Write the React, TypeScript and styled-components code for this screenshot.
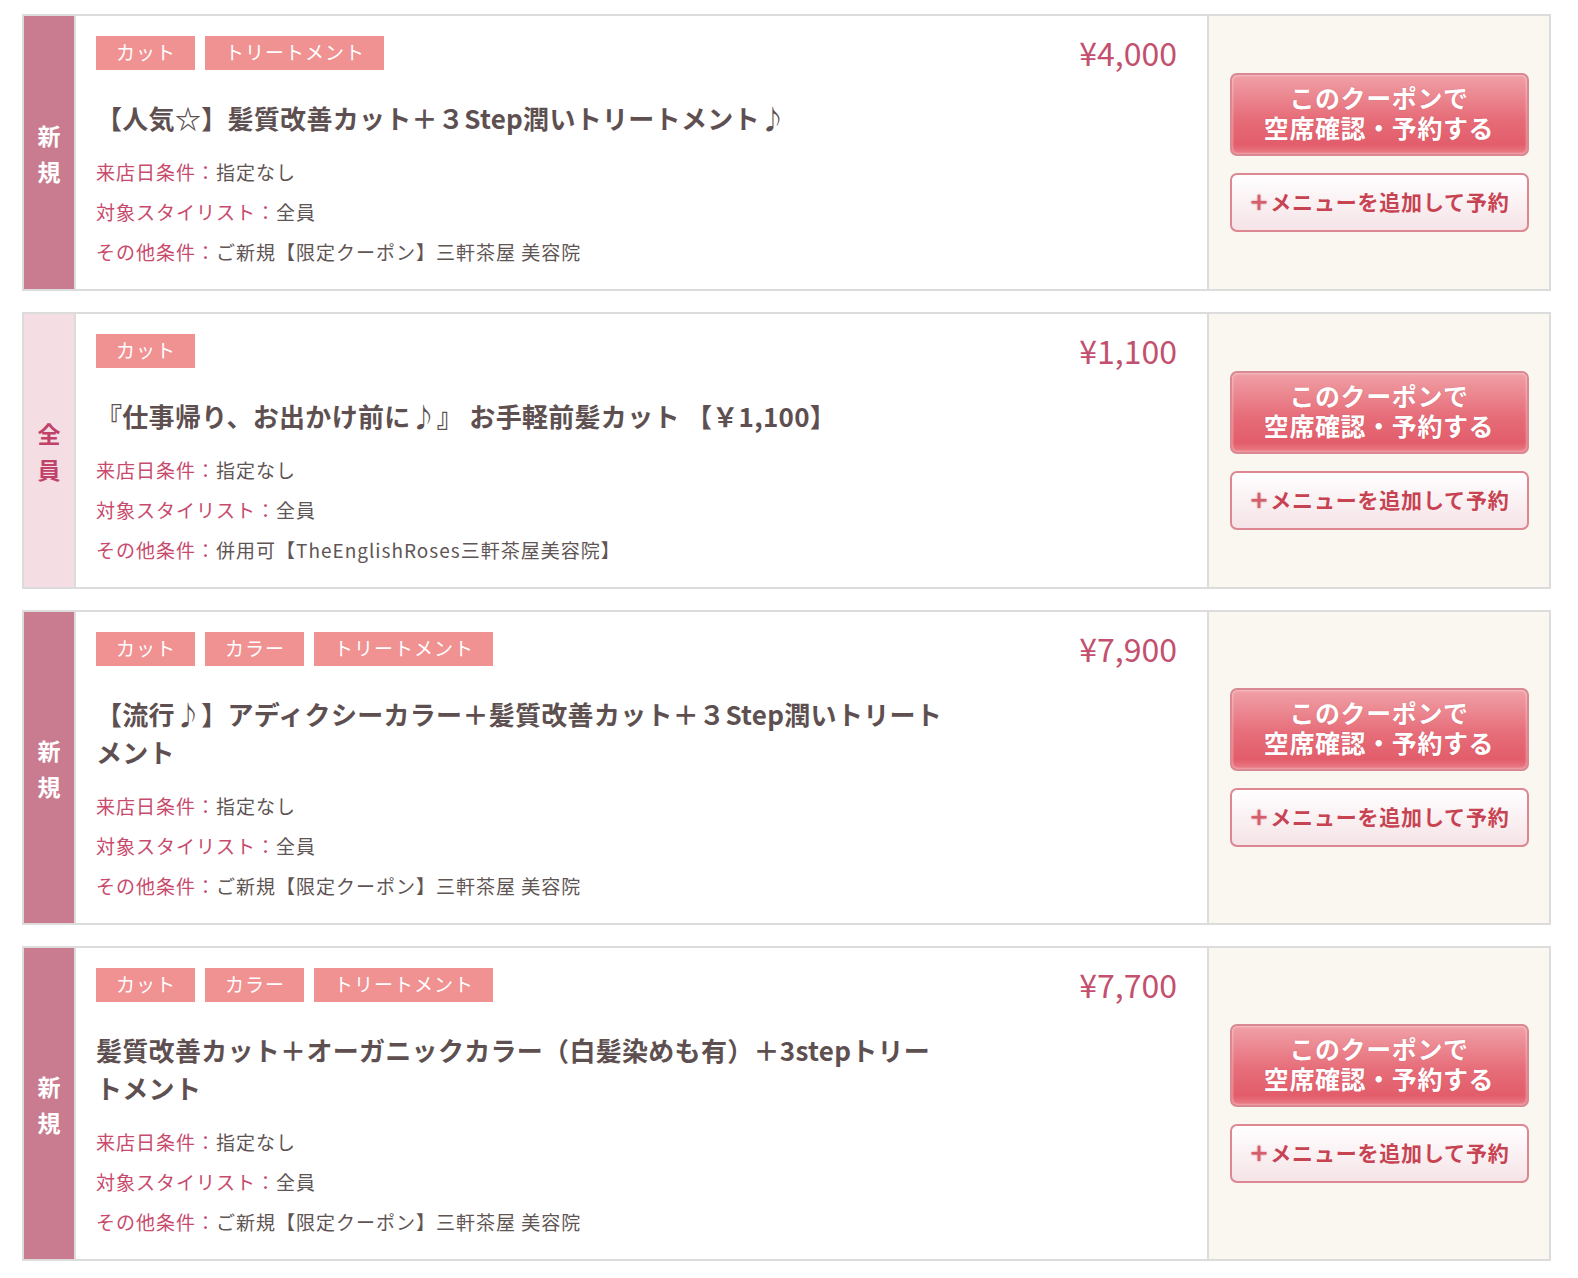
import React from 'react';
import styled, { createGlobalStyle } from 'styled-components';

type Target = 'new' | 'all';

interface Coupon {
    target: Target;
    tags: string[];
    title: string;
    price: string;
    other: string;
}

const coupons: Coupon[] = [
    {
        target: 'new',
        tags: ['カット', 'トリートメント'],
        title: '【人気☆】髪質改善カット＋３Step潤いトリートメント♪',
        price: '¥4,000',
        other: 'ご新規【限定クーポン】三軒茶屋 美容院',
    },
    {
        target: 'all',
        tags: ['カット'],
        title: '『仕事帰り、お出かけ前に♪』 お手軽前髪カット 【￥1,100】',
        price: '¥1,100',
        other: '併用可【TheEnglishRoses三軒茶屋美容院】',
    },
    {
        target: 'new',
        tags: ['カット', 'カラー', 'トリートメント'],
        title: '【流行♪】アディクシーカラー＋髪質改善カット＋３Step潤いトリートメント',
        price: '¥7,900',
        other: 'ご新規【限定クーポン】三軒茶屋 美容院',
    },
    {
        target: 'new',
        tags: ['カット', 'カラー', 'トリートメント'],
        title: '髪質改善カット＋オーガニックカラー（白髪染めも有）＋3stepトリートメント',
        price: '¥7,700',
        other: 'ご新規【限定クーポン】三軒茶屋 美容院',
    },
];

const GlobalStyle = createGlobalStyle`
  body {
    margin: 0;
    background: #fff;
    font-family: "Noto Sans CJK JP", "Noto Sans", sans-serif;
  }
`;

const List = styled.div`
  width: 1529px;
  padding: 14px 0 0 22px;
`;

const Card = styled.section`
  display: flex;
  border: 2px solid #dcdcdc;
  margin-bottom: 21px;
`;

const Side = styled.div<{ $target: Target }>`
  width: 50px;
  flex-shrink: 0;
  display: flex;
  flex-direction: column;
  align-items: center;
  justify-content: center;
  background: ${p => (p.$target === 'new' ? '#c97b8f' : '#f4dde3')};
  color: ${p => (p.$target === 'new' ? '#fff' : '#c0426a')};
  font-size: 23px;
  font-weight: bold;
  line-height: 36px;
`;

const Body = styled.div`
  flex: 1;
  display: flex;
  border-left: 2px solid #dcdcdc;
  padding: 20px 30px 17px 20px;
`;

const Main = styled.div`
  flex: 1;
`;

const Tags = styled.div`
  display: flex;
  gap: 10px;
`;

const Tag = styled.span`
  height: 34px;
  padding: 0 19px 0 20px;
  background: #f09192;
  color: #fff;
  font-size: 19px;
  letter-spacing: 1px;
  line-height: 32px;
`;

const Title = styled.h2`
  max-width: 852px;
  margin: 29px 0 15px;
  color: #5e5050;
  font-size: 26px;
  font-weight: bold;
  letter-spacing: 0.3px;
  line-height: 38px;
`;

const Cond = styled.div`
  font-size: 19px;
  letter-spacing: 1px;
  line-height: 40px;
  color: #5f5555;
`;

const CondLabel = styled.span`
  color: #c84a6c;
`;

const Price = styled.div`
  margin-top: -4px;
  color: #c2506e;
  font-size: 32px;
  line-height: 40px;
  white-space: nowrap;
`;

const Actions = styled.div`
  width: 340px;
  flex-shrink: 0;
  display: flex;
  flex-direction: column;
  align-items: center;
  justify-content: center;
  gap: 17px;
  border-left: 2px solid #dcdcdc;
  background: #faf6f0;
`;

const ReserveButton = styled.button`
  width: 299px;
  height: 83px;
  padding: 0 0 6px;
  border: 2px solid #da8891;
  border-radius: 7px;
  background: linear-gradient(#f0a0a6, #e66d79 55%, #e35d6b 88%, #ea7c86);
  box-shadow: inset 0 0 3px rgba(255, 255, 255, 0.7);
  color: #fff;
  font-family: inherit;
  font-size: 25px;
  font-weight: bold;
  letter-spacing: 0.6px;
  text-shadow: 0 0 1px rgba(170, 40, 60, 0.4);
  cursor: pointer;
`;

const ButtonLine = styled.span`
  display: block;
  line-height: 30px;
`;

const AddButton = styled.button`
  width: 299px;
  height: 59px;
  padding: 0 0 4px;
  border: 2px solid #dc8792;
  border-radius: 7px;
  background: linear-gradient(#fff, #f5e3e7);
  color: #c84352;
  font-family: inherit;
  font-size: 21px;
  font-weight: bold;
  letter-spacing: 0.8px;
  cursor: pointer;
`;

const Plus = styled.span`
  color: #d2606c;
  font-weight: 900;
  text-shadow: 0 0 2px rgba(210, 80, 95, 0.8);
`;

const CouponCard = ({ coupon }: { coupon: Coupon }) => {
    const label = coupon.target === 'new' ? '新規' : '全員';
    return (
        <Card>
            <Side $target={coupon.target}>
                {label.split('').map(c => <span key={c}>{c}</span>)}
            </Side>
            <Body>
                <Main>
                    <Tags>
                        {coupon.tags.map(t => <Tag key={t}>{t}</Tag>)}
                    </Tags>
                    <Title>{coupon.title}</Title>
                    <Cond><CondLabel>来店日条件：</CondLabel>指定なし</Cond>
                    <Cond><CondLabel>対象スタイリスト：</CondLabel>全員</Cond>
                    <Cond><CondLabel>その他条件：</CondLabel>{coupon.other}</Cond>
                </Main>
                <Price>{coupon.price}</Price>
            </Body>
            <Actions>
                <ReserveButton>
                    <ButtonLine>このクーポンで</ButtonLine>
                    <ButtonLine>空席確認・予約する</ButtonLine>
                </ReserveButton>
                <AddButton><Plus>＋</Plus>メニューを追加して予約</AddButton>
            </Actions>
        </Card>
    );
};

export default function App() {
    return (
        <>
            <GlobalStyle />
            <List>
                {coupons.map((c, i) => <CouponCard key={i} coupon={c} />)}
            </List>
        </>
    );
}
